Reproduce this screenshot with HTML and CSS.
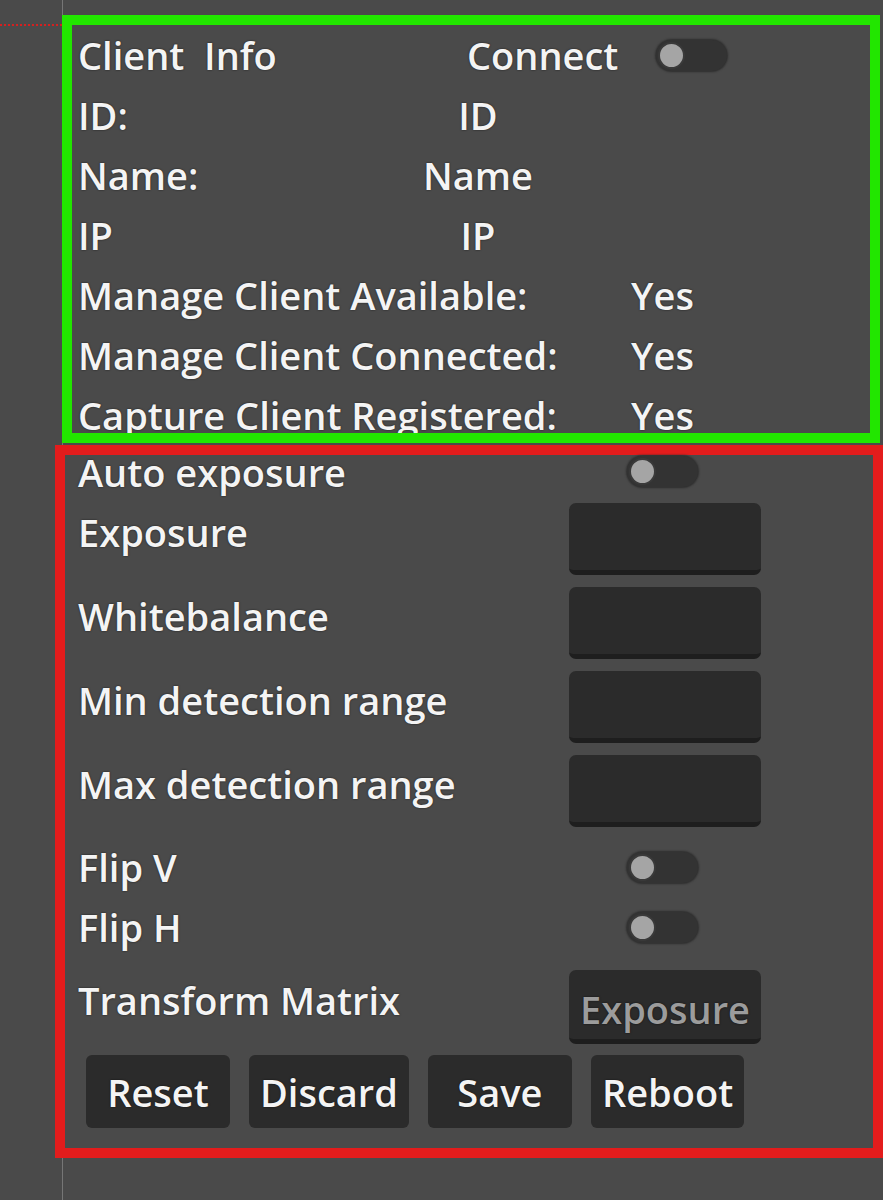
FILE: index.html
```html
<!DOCTYPE html>
<html>
<head>
<meta charset="utf-8">
<link rel="stylesheet" href="styles.css">
</head>
<body>
<div class="page">
  <div class="gutter"><div class="marker"></div></div>
  <div class="main">
    <section class="info">
      <div class="row head">
        <span class="title">Client  Info</span>
        <span class="connect">Connect</span>
        <span class="toggle"><span class="knob"></span></span>
      </div>
      <div class="row pair"><span>ID:</span><span class="val">ID</span></div>
      <div class="row pair"><span>Name:</span><span class="val">Name</span></div>
      <div class="row pair"><span>IP</span><span class="val">IP</span></div>
      <div class="row status"><span>Manage Client Available:</span><span>Yes</span></div>
      <div class="row status"><span>Manage Client Connected:</span><span>Yes</span></div>
      <div class="row status"><span>Capture Client Registered:</span><span>Yes</span></div>
    </section>
    <section class="settings">
      <div class="srow switch first"><span class="label">Auto exposure</span><span class="toggle"><span class="knob"></span></span></div>
      <div class="srow field"><span class="label">Exposure</span><span class="input"></span></div>
      <div class="srow field"><span class="label">Whitebalance</span><span class="input"></span></div>
      <div class="srow field"><span class="label">Min detection range</span><span class="input"></span></div>
      <div class="srow field"><span class="label">Max detection range</span><span class="input"></span></div>
      <div class="srow switch flip"><span class="label">Flip V</span><span class="toggle"><span class="knob"></span></span></div>
      <div class="srow switch"><span class="label">Flip H</span><span class="toggle"><span class="knob"></span></span></div>
      <div class="srow field transform"><span class="label">Transform Matrix</span><span class="input btn-in">Exposure</span></div>
      <div class="actions">
        <span class="btn">Reset</span>
        <span class="btn">Discard</span>
        <span class="btn">Save</span>
        <span class="btn">Reboot</span>
      </div>
    </section>
  </div>
</div>
</body>
</html>
```
FILE: styles.css
```css
html, body {
  margin: 0;
  background: #4a4a4a;
}
body {
  font-family: "Open Sans", "Noto Sans", sans-serif;
  color: #f4f4f4;
  font-size: 38px;
  font-weight: 600;
  text-shadow: 0 0 2px rgba(0, 0, 0, 0.7);
}
.page {
  display: flex;
  min-height: 1200px;
}
.gutter {
  width: 62px;
  flex: none;
}
.marker {
  margin-top: 24px;
  border-top: 2px dotted #d42020;
}
.main {
  flex: none;
  width: 820px;
  border-left: 1px solid #767676;
  padding-top: 15px;
}
.info {
  box-sizing: border-box;
  width: 818px;
  height: 428px;
  margin-left: -1px;
  border: 10px solid #22e600;
  padding-left: 6px;
  overflow: hidden;
}
.row {
  height: 60px;
  line-height: 60px;
  display: flex;
  align-items: center;
  white-space: pre;
}
.head .title { width: 389px; }
.head .connect { margin-right: 38px; }
.pair {
  display: grid;
  grid-template-columns: 300px 200px;
}
.pair .val { justify-self: center; }
.status {
  display: grid;
  grid-template-columns: 553px auto;
}
.toggle {
  position: relative;
  box-sizing: border-box;
  display: inline-block;
  width: 71px;
  height: 31px;
  border-radius: 16px;
  background: #333333;
  box-shadow: 0 0 2px 1px #2e2e2e;
}
.knob {
  position: absolute;
  left: 2px;
  top: 2px;
  width: 27px;
  height: 27px;
  box-sizing: border-box;
  border-radius: 50%;
  background: #a5a5a5;
  border: 2px solid #3a3a3a;
}
.settings {
  box-sizing: border-box;
  width: 828px;
  height: 713px;
  margin: 2px 0 0 -8px;
  border: 10px solid #e31c1c;
  padding-left: 13px;
}
.srow {
  display: grid;
  grid-template-columns: 491px 192px;
}
.switch {
  height: 60px;
  grid-template-rows: minmax(0, 1fr);
  align-items: center;
}
.switch .label { line-height: 40px; }
.switch .toggle { margin-left: 58px; }
.switch.first { height: 33px; }
.switch.flip { margin-top: 10px; }
.field { margin-top: 12px; }
.switch.first + .field { margin-top: 15px; }
.field .label { line-height: 58px; }
.input {
  box-sizing: border-box;
  height: 72px;
  border-radius: 7px;
  background: #2b2b2b;
  border-bottom: 5px solid #1e1e1e;
}
.transform { margin-top: 13px; }
.transform .label { line-height: 60px; }
.btn-in {
  height: 74px;
  color: #9c9c9c;
  text-align: center;
  line-height: 78px;
}
.actions {
  display: flex;
  gap: 19px;
  margin: 11px 0 0 8px;
}
.btn {
  box-sizing: border-box;
  min-width: 144px;
  height: 73px;
  padding: 0 11px;
  line-height: 74px;
  text-align: center;
  border-radius: 6px;
  background: #2b2b2b;
}
```
